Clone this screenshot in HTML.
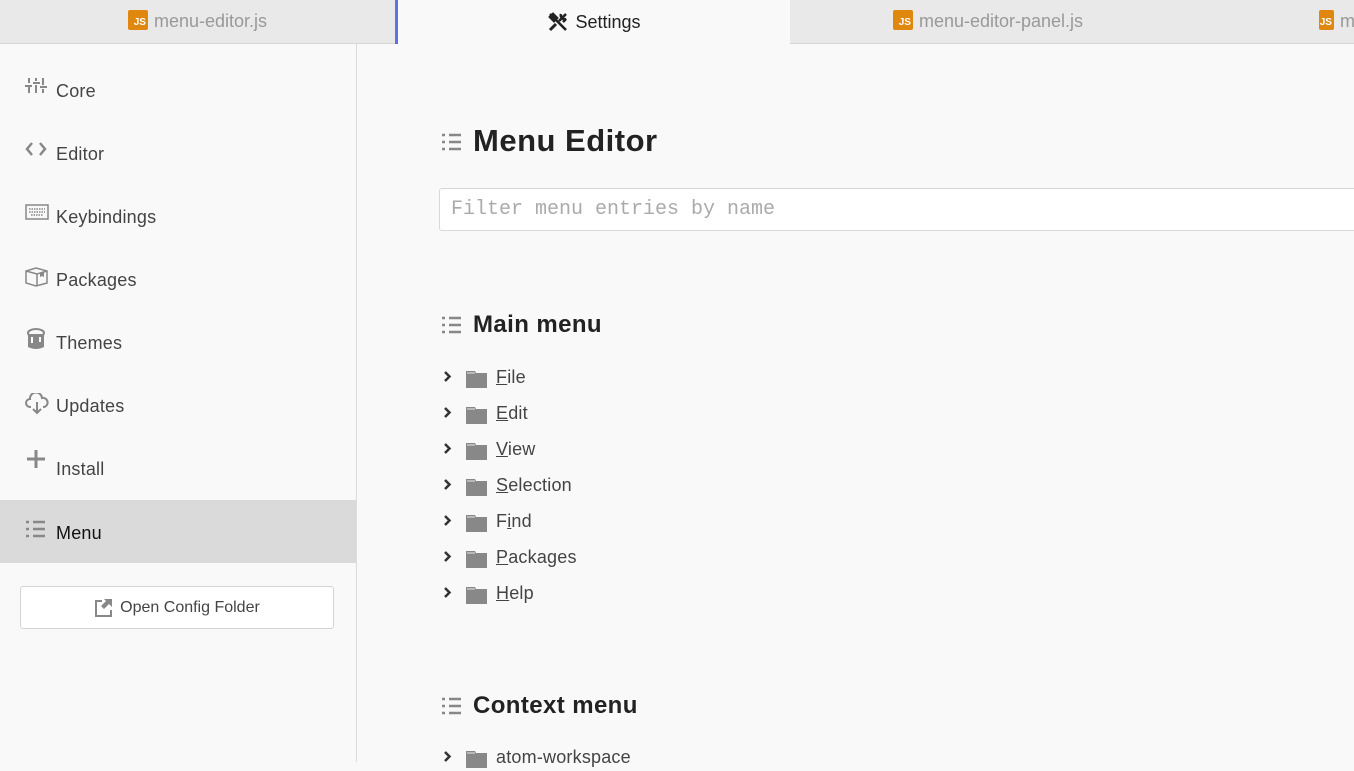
<!DOCTYPE html>
<html><head><meta charset="utf-8"><style>
*{box-sizing:border-box;margin:0;padding:0}
body{width:1354px;height:762px;overflow:hidden;background:#f9f9f9;font-family:"Liberation Sans",sans-serif;color:#333;position:relative;letter-spacing:0.2px}
.tab{position:absolute;top:0;height:44px;background:#e9e9e9;border-bottom:1px solid #d6d6d6;border-right:1px solid #d9d9d9;color:#999;font-size:18px;display:flex;align-items:center;justify-content:center;letter-spacing:0}
.tab.act{background:#f9f9f9;border-bottom:none;border-left:3px solid #5e72e4;color:#222}
.js{display:inline-block;width:20px;height:20px;background:#e0870f;border-radius:2px;color:#fff;font-size:10px;font-weight:bold;line-height:26px;text-align:right;padding-right:2px;margin-right:6px;position:relative;top:-2px}
.side{position:absolute;left:0;top:44px;width:357px;height:718px;border-right:1px solid #dcdcdc}
.item{position:absolute;left:0;width:356px;height:63px;font-size:18px;color:#444}
.item svg{position:absolute;left:25px;top:20px}
.item span{position:absolute;left:56px;top:23px}
.item.sel{background:#dadada;color:#111}
.btn{position:absolute;left:20px;top:542px;width:314px;height:43px;border:1px solid #d4d4d4;border-radius:3px;background:#fff;font-size:16px;color:#444;display:flex;align-items:center;justify-content:center;letter-spacing:0}
h1,h2{position:absolute;left:473px;font-weight:bold;color:#222}
h1{font-size:31px;top:123px;letter-spacing:0.5px}
h2{font-size:24px;letter-spacing:0.4px}
.hi{position:absolute;left:442px}
.inp{position:absolute;left:439px;top:188px;width:930px;height:43px;border:1px solid #d8d8d8;border-radius:3px;background:#fff;font-family:"Liberation Mono",monospace;font-size:20px;color:#aaa;padding:9px 11px;letter-spacing:0}
.row{position:absolute;left:442px;height:24px;font-size:18px;color:#444}
.row .ch{position:absolute;left:0;top:0}
.row .fd{position:absolute;left:24px;top:3px}
.row span{position:absolute;left:54px;top:0;white-space:nowrap}
u{text-decoration:underline}
</style></head><body>
<div class="tab" style="left:0;width:396px"><span class="js">JS</span>menu-editor.js</div>
<div class="tab act" style="left:395px;width:396px"><svg width="22" height="22" viewBox="0 0 22 22" style="margin-right:6px"><path d="M3 3l16 16M6 3l-3 3 4 4 3-3zM19 3l-7 7M14 3a4 4 0 0 0 5 5l-3 3" stroke="#222" stroke-width="2.6" fill="none"/><path d="M3 19l6-6" stroke="#222" stroke-width="3"/></svg>Settings</div>
<div class="tab" style="left:790px;width:397px"><span class="js">JS</span>menu-editor-panel.js</div>
<div class="tab" style="left:1186px;width:200px;justify-content:flex-start;padding-left:133px"><span class="js">JS</span>menu</div>

<div class="side">
<div class="item" style="top:14px"><svg width="22" height="18"><path d="M4 0v5M4 9v6M11 0v3M11 7v8M18 0v7M18 11v4M0 8h7M8 5h7M15 9h7" stroke="#888" stroke-width="2"/></svg><span>Core</span></div>
<div class="item" style="top:77px"><svg width="22" height="18"><path d="M7 2L2 8l5 6M15 2l5 6-5 6" stroke="#888" stroke-width="2.5" fill="none"/></svg><span>Editor</span></div>
<div class="item" style="top:140px"><svg width="24" height="18"><rect x="1" y="1" width="22" height="14" fill="none" stroke="#888" stroke-width="1.5"/><path d="M4 5h16M4 8h16M6 11h12" stroke="#888" stroke-width="1.5" stroke-dasharray="1.5 1"/></svg><span>Keybindings</span></div>
<div class="item" style="top:203px"><svg width="24" height="20"><path d="M1 4l10-3 11 3v12l-11 3-10-3zM1 4l11 3 10-3M12 7v12" fill="none" stroke="#888" stroke-width="1.5"/><path d="M15 6v4l2-1 2 1V5" fill="#888"/></svg><span>Packages</span></div>
<div class="item" style="top:266px"><svg width="22" height="24" style="top:17px"><ellipse cx="11" cy="6" rx="8" ry="4" fill="none" stroke="#888" stroke-width="2"/><path d="M3 7v13q8 4 16 0V7" fill="#888"/><path d="M7 10v6M15 10v5" stroke="#fff" stroke-width="2"/></svg><span>Themes</span></div>
<div class="item" style="top:329px"><svg width="24" height="22"><path d="M6 14H5a4 4 0 0 1 0-8 6 6 0 0 1 12-1 4.5 4.5 0 0 1 2 9h-1" fill="none" stroke="#888" stroke-width="2"/><path d="M12 9v11M8 16l4 4 4-4" fill="none" stroke="#888" stroke-width="2"/></svg><span>Updates</span></div>
<div class="item" style="top:392px"><svg width="22" height="22" style="top:12px"><path d="M11 2v18M2 11h18" stroke="#888" stroke-width="3"/></svg><span>Install</span></div>
<div class="item sel" style="top:456px"><svg width="22" height="20"><path d="M1 2h3M1 9h3M1 16h3M8 2h12M8 9h12M8 16h12" stroke="#888" stroke-width="2.5"/></svg><span>Menu</span></div>
<div class="btn"><svg width="20" height="19" style="margin-right:6px"><path d="M8 3H2v15h15v-6" fill="none" stroke="#888" stroke-width="2"/><path d="M10 1h8v8l-3-3-5 5-3-3 5-5z" fill="#888"/></svg>Open Config Folder</div>
</div>

<svg class="hi" style="top:133px" width="20" height="20"><path d="M0 2h3M0 9h3M0 16h3M7 2h12M7 9h12M7 16h12" stroke="#888" stroke-width="2.5"/></svg>
<h1>Menu Editor</h1>
<div class="inp">Filter menu entries by name</div>

<svg class="hi" style="top:316px" width="20" height="20"><path d="M0 2h3M0 9h3M0 16h3M7 2h12M7 9h12M7 16h12" stroke="#888" stroke-width="2.5"/></svg>
<h2 style="top:311px">Main menu</h2>

<div class="row" style="top:367px"><svg class="ch" width="12" height="20"><path d="M3 5l4.5 4.5L3 14" stroke="#333" stroke-width="2.5" fill="none"/></svg><svg class="fd" width="22" height="18"><path d="M0 1h9l1 2h11v15H0z" fill="#888"/><path d="M1 3h8" stroke="#fff" stroke-width=".8"/></svg><span><u>F</u>ile</span></div>
<div class="row" style="top:403px"><svg class="ch" width="12" height="20"><path d="M3 5l4.5 4.5L3 14" stroke="#333" stroke-width="2.5" fill="none"/></svg><svg class="fd" width="22" height="18"><path d="M0 1h9l1 2h11v15H0z" fill="#888"/><path d="M1 3h8" stroke="#fff" stroke-width=".8"/></svg><span><u>E</u>dit</span></div>
<div class="row" style="top:439px"><svg class="ch" width="12" height="20"><path d="M3 5l4.5 4.5L3 14" stroke="#333" stroke-width="2.5" fill="none"/></svg><svg class="fd" width="22" height="18"><path d="M0 1h9l1 2h11v15H0z" fill="#888"/><path d="M1 3h8" stroke="#fff" stroke-width=".8"/></svg><span><u>V</u>iew</span></div>
<div class="row" style="top:475px"><svg class="ch" width="12" height="20"><path d="M3 5l4.5 4.5L3 14" stroke="#333" stroke-width="2.5" fill="none"/></svg><svg class="fd" width="22" height="18"><path d="M0 1h9l1 2h11v15H0z" fill="#888"/><path d="M1 3h8" stroke="#fff" stroke-width=".8"/></svg><span><u>S</u>election</span></div>
<div class="row" style="top:511px"><svg class="ch" width="12" height="20"><path d="M3 5l4.5 4.5L3 14" stroke="#333" stroke-width="2.5" fill="none"/></svg><svg class="fd" width="22" height="18"><path d="M0 1h9l1 2h11v15H0z" fill="#888"/><path d="M1 3h8" stroke="#fff" stroke-width=".8"/></svg><span>F<u>i</u>nd</span></div>
<div class="row" style="top:547px"><svg class="ch" width="12" height="20"><path d="M3 5l4.5 4.5L3 14" stroke="#333" stroke-width="2.5" fill="none"/></svg><svg class="fd" width="22" height="18"><path d="M0 1h9l1 2h11v15H0z" fill="#888"/><path d="M1 3h8" stroke="#fff" stroke-width=".8"/></svg><span><u>P</u>ackages</span></div>
<div class="row" style="top:583px"><svg class="ch" width="12" height="20"><path d="M3 5l4.5 4.5L3 14" stroke="#333" stroke-width="2.5" fill="none"/></svg><svg class="fd" width="22" height="18"><path d="M0 1h9l1 2h11v15H0z" fill="#888"/><path d="M1 3h8" stroke="#fff" stroke-width=".8"/></svg><span><u>H</u>elp</span></div>

<svg class="hi" style="top:697px" width="20" height="20"><path d="M0 2h3M0 9h3M0 16h3M7 2h12M7 9h12M7 16h12" stroke="#888" stroke-width="2.5"/></svg>
<h2 style="top:692px">Context menu</h2>
<div class="row" style="top:747px"><svg class="ch" width="12" height="20"><path d="M3 5l4.5 4.5L3 14" stroke="#333" stroke-width="2.5" fill="none"/></svg><svg class="fd" width="22" height="18"><path d="M0 1h9l1 2h11v15H0z" fill="#888"/><path d="M1 3h8" stroke="#fff" stroke-width=".8"/></svg><span>atom-workspace</span></div>
</body></html>
